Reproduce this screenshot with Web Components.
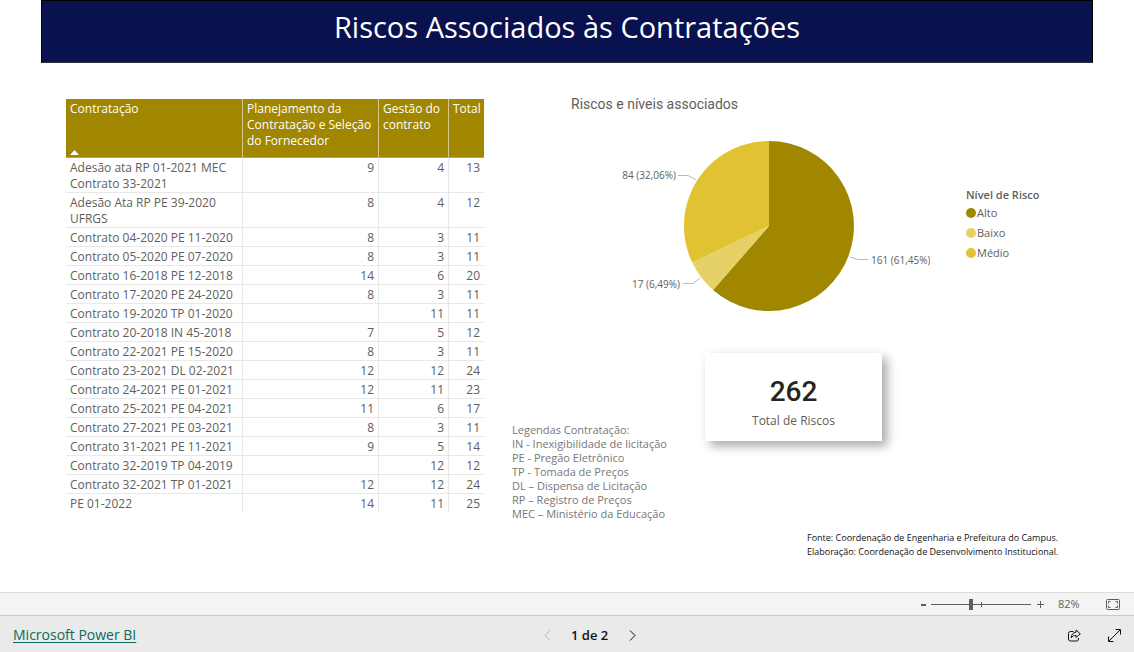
<!DOCTYPE html>
<html lang="pt-BR">
<head>
<meta charset="utf-8">
<title>Riscos Associados às Contratações</title>
<style>
  html, body { margin: 0; height: 100%; background: #fff; }
  body { font-family: "Open Sans", "Noto Sans", sans-serif; font-size: 12px; color: #605e5c; }
</style>
</head>
<body>
<report-page>
  <report-banner slot="banner">Riscos Associados às Contratações</report-banner>
  <contract-table slot="table"></contract-table>
  <risk-chart slot="chart">Riscos e níveis associados</risk-chart>
  <acronym-list slot="notes">
    <span slot="title">Legendas Contratação:</span>
    <span>IN - Inexigibilidade de licitação</span>
    <span>PE - Pregão Eletrônico</span>
    <span>TP - Tomada de Preços</span>
    <span>DL – Dispensa de Licitação</span>
    <span>RP – Registro de Preços</span>
    <span>MEC – Ministério da Educação</span>
  </acronym-list>
  <metric-card slot="metric"><span slot="value">262</span>Total de Riscos</metric-card>
  <source-note slot="source">
    <span>Fonte: Coordenação de Engenharia e Prefeitura do Campus.</span>
    <span>Elaboração: Coordenação de Desenvolvimento Institucional.</span>
  </source-note>
  <zoom-bar slot="footer"></zoom-bar>
  <page-bar slot="footer"></page-bar>
</report-page>

<script>
const define = (name, html, setup) => {
  const template = document.createElement('template');
  template.innerHTML = html;
  customElements.define(name, class extends HTMLElement {
    constructor() {
      super();
      const root = this.attachShadow({ mode: 'open' });
      root.append(template.content.cloneNode(true));
      if (setup) setup(root);
    }
  });
};

define('report-page', `
  <style>
    :host { display: flex; flex-direction: column; min-height: 100vh; }
    main { flex: 1; }
    .canvas { display: grid; grid-template-columns: 418fr 557fr; column-gap: 28px;
      padding: 31px 65px 0 66px; align-items: start; }
    .table { padding-top: 5px; }
    .right { display: flex; flex-direction: column; }
    .row { display: flex; align-items: flex-start; }
    .notes { flex: 0 0 193px; padding-top: 95px; }
    .metric { padding-top: 25px; }
    .source { align-self: flex-end; padding-top: 10px; }
  </style>
  <main>
    <slot name="banner"></slot>
    <div class="canvas">
      <div class="table"><slot name="table"></slot></div>
      <div class="right">
        <slot name="chart"></slot>
        <div class="row">
          <div class="notes"><slot name="notes"></slot></div>
          <div class="metric"><slot name="metric"></slot></div>
        </div>
        <div class="source"><slot name="source"></slot></div>
      </div>
    </div>
  </main>
  <slot name="footer"></slot>
`);

define('report-banner', `
  <style>
    :host { display: block; margin: 0 41px; background: #09114f; border: 1px solid #000;
      border-bottom-color: #32343f; padding-bottom: 9px; }
    h1 { margin: 0; font-size: 29px; line-height: 52px; font-weight: 400; color: #fff; text-align: center; }
  </style>
  <h1><slot></slot></h1>
`);

const contracts = [
  ['Adesão ata RP 01-2021 MEC Contrato 33-2021', 9, 4, 13],
  ['Adesão Ata RP PE 39-2020 UFRGS', 8, 4, 12],
  ['Contrato 04-2020 PE 11-2020', 8, 3, 11],
  ['Contrato 05-2020 PE 07-2020', 8, 3, 11],
  ['Contrato 16-2018 PE 12-2018', 14, 6, 20],
  ['Contrato 17-2020 PE 24-2020', 8, 3, 11],
  ['Contrato 19-2020 TP 01-2020', '', 11, 11],
  ['Contrato 20-2018 IN 45-2018', 7, 5, 12],
  ['Contrato 22-2021 PE 15-2020', 8, 3, 11],
  ['Contrato 23-2021 DL 02-2021', 12, 12, 24],
  ['Contrato 24-2021 PE 01-2021', 12, 11, 23],
  ['Contrato 25-2021 PE 04-2021', 11, 6, 17],
  ['Contrato 27-2021 PE 03-2021', 8, 3, 11],
  ['Contrato 31-2021 PE 11-2021', 9, 5, 14],
  ['Contrato 32-2019 TP 04-2019', '', 12, 12],
  ['Contrato 32-2021 TP 01-2021', 12, 12, 24],
  ['PE 01-2022', 14, 11, 25]
];

define('contract-table', `
  <style>
    :host { display: block; }
    table { width: 100%; table-layout: fixed; border-collapse: separate; border-spacing: 0;
      font-size: 12px; line-height: 16px; }
    .c2 { width: 136px; } .c3 { width: 70px; } .c4 { width: 35px; }
    th, td { box-sizing: border-box; padding: 2px 4px 0; vertical-align: top; font-weight: 400;
      border-right: 1px solid #e8e8e8; border-bottom: 1px solid #e8e8e8; }
    th { height: 59px; background: #a18600; color: #fff; text-align: left;
      border-right-color: #d3c68a; border-bottom-color: #b9a54c; }
    tbody th { height: auto; background: none; color: inherit;
      border-right-color: #e8e8e8; border-bottom-color: #e8e8e8; }
    td { text-align: right; }
    tr > :last-child { border-right: 0; padding-right: 4px; }
    thead th:last-child { padding-right: 0; }
    tbody tr:last-child > * { border-bottom: 0; }
    button { all: unset; display: flex; flex-direction: column; justify-content: space-between;
      align-items: flex-start; height: 54px; cursor: pointer; }
    svg { display: block; }
  </style>
  <table>
    <colgroup><col><col class="c2"><col class="c3"><col class="c4"></colgroup>
    <thead><tr>
      <th scope="col" aria-sort="ascending"><button type="button">Contratação
        <svg width="9" height="5" viewBox="0 0 9 5" aria-hidden="true"><path d="M0 5 4.500 0 9 5z" fill="#fff"/></svg></button></th>
      <th scope="col">Planejamento da Contratação e Seleção do Fornecedor</th>
      <th scope="col">Gestão do contrato</th>
      <th scope="col">Total</th>
    </tr></thead>
    <tbody></tbody>
  </table>
`, root => {
  const body = root.querySelector('tbody');
  for (const contract of contracts) {
    const row = body.insertRow();
    contract.forEach((value, i) => {
      const cell = document.createElement(i ? 'td' : 'th');
      if (!i) cell.scope = 'row';
      cell.textContent = value;
      row.append(cell);
    });
  }
});

define('risk-chart', `
  <style>
    :host { display: block; padding-left: 59px; }
    h2 { margin: 0; font: 400 14px/20px Roboto, sans-serif; color: #605e5c; }
    .plot { display: flex; align-items: flex-start; gap: 36px; padding: 18px 0 0 49px; }
    svg { display: block; flex: none; }
    text { font-size: 10px; fill: #605e5c; }
    polyline { fill: none; stroke: #b8b8b8; }
    .legend { padding-top: 55px; }
    h3 { margin: 0; font-size: 11px; line-height: 16px; font-weight: 600; white-space: nowrap; }
    ul { margin: 0; padding: 0; list-style: none; line-height: 20px; font-size: 11px; }
    li { display: flex; align-items: center; gap: 1px; }
    i { width: 10px; height: 10px; border-radius: 50%; }
    .high { background: #a18600; } .low { background: #e6d167; } .mid { background: #e1c233; }
  </style>
  <h2><slot></slot></h2>
  <div class="plot">
    <svg width="310" height="196" viewBox="0 0 310 196" role="img" aria-label="Riscos por nível">
      <path fill="#a18600" d="M149 94V9A85 85 0 1 1 93 158z"/>
      <path fill="#e6d167" d="M149 94 93 158A85 85 0 0 1 72.200 130.500z"/>
      <path fill="#e1c233" d="M149 94 72.200 130.500A85 85 0 0 1 149 9z"/>
      <polyline points="58,43.500 68,43.500 76,48"/>
      <polyline points="63,151.500 73,151.500 80,146"/>
      <polyline points="230,125 238,127.500 248,127.500"/>
      <text x="56" y="47" text-anchor="end">84 (32,06%)</text>
      <text x="60" y="156" text-anchor="end">17 (6,49%)</text>
      <text x="251" y="132">161 (61,45%)</text>
    </svg>
    <div class="legend">
      <h3>Nível de Risco</h3>
      <ul>
        <li><i class="high"></i>Alto</li>
        <li><i class="low"></i>Baixo</li>
        <li><i class="mid"></i>Médio</li>
      </ul>
    </div>
  </div>
`);

define('acronym-list', `
  <style>
    :host { display: block; font-size: 11px; line-height: 14px; color: #777; white-space: nowrap; }
    ::slotted(span) { display: block; }
  </style>
  <slot name="title"></slot><slot></slot>
`);

define('metric-card', `
  <style>
    :host { display: flex; flex-direction: column; align-items: center; gap: 3px; box-sizing: border-box;
      width: 177px; padding: 23px 8px 10px; background: #fff; box-shadow: 5px 5px 10px rgba(0, 0, 0, .35); }
    strong { font: 500 28px/32px Roboto, sans-serif; color: #252423; }
    span { font-size: 12px; line-height: 20px; }
  </style>
  <strong><slot name="value"></slot></strong>
  <span><slot></slot></span>
`);

define('source-note', `
  <style>
    :host { display: block; min-width: 262px; font-size: 9px; line-height: 14px; color: #111; }
    ::slotted(span) { display: block; }
  </style>
  <slot></slot>
`);

define('zoom-bar', `
  <style>
    :host { display: flex; align-items: center; justify-content: flex-end; box-sizing: border-box; height: 23px;
      padding-right: 14px; background: #f4f4f4; border-top: 1px solid #dcdcdc; color: #605e5c; }
    button { all: unset; cursor: pointer; display: flex; align-items: center; justify-content: center; }
    .step { width: 19px; height: 22px; }
    svg { display: block; }
    input { appearance: none; width: 100px; height: 11px; margin: 0; cursor: pointer;
      background: linear-gradient(#605e5c, #605e5c) 50px 50% / 1px 5px no-repeat,
        linear-gradient(#605e5c, #605e5c) 0 50% / 100% 1px no-repeat; }
    input::-webkit-slider-thumb { appearance: none; width: 4px; height: 11px; background: #605e5c; }
    output { width: 24px; margin: 0 24px 0 8px; font-size: 11px; line-height: 20px; }
  </style>
  <button class="step" type="button" aria-label="Reduzir">
    <svg width="9" height="9" viewBox="0 0 9 9"><path d="M4 5h5" stroke="#605e5c" stroke-width="2"/></svg></button>
  <input id="zoom" type="range" min="10" max="192" value="82" aria-label="Zoom">
  <button class="step" type="button" aria-label="Ampliar">
    <svg width="9" height="9" viewBox="0 0 9 9"><path d="M1 4.500h7M4.500 1v7" stroke="#605e5c"/></svg></button>
  <output for="zoom">82%</output>
  <button type="button" aria-label="Ajustar à página">
    <svg width="14" height="11" viewBox="0 0 14 11" fill="none" stroke="#605e5c">
      <rect x=".5" y=".5" width="13" height="10" rx="1"/>
      <path d="M2.500 4.500v-2h2M9.500 2.500h2v2M11.500 6.500v2h-2M4.500 8.500h-2v-2"/></svg></button>
`, root => {
  const input = root.querySelector('input');
  const output = root.querySelector('output');
  const [minus, plus] = root.querySelectorAll('.step');
  const show = () => { output.textContent = input.value + '%'; };
  input.addEventListener('input', show);
  minus.addEventListener('click', () => { input.stepDown(10); show(); });
  plus.addEventListener('click', () => { input.stepUp(10); show(); });
});

define('page-bar', `
  <style>
    :host { display: flex; align-items: center; box-sizing: border-box; height: 37px; padding: 2px 0 0 13px;
      background: #eaeaea; border-top: 1px solid #c8c8c8; color: #111; }
    a { font-size: 14px; line-height: 20px; color: #0b6a5d; text-underline-offset: 2px; }
    nav { flex: 1; display: flex; align-items: center; justify-content: center; gap: 12px;
      font-size: 13px; line-height: 20px; font-weight: 600; }
    button { all: unset; cursor: pointer; display: flex; align-items: center; justify-content: center;
      width: 24px; height: 34px; }
    .tools { display: flex; padding-left: 11px; }
    .tools button { width: 40px; }
    svg { display: block; fill: none; stroke: #111; }
    button:disabled svg { stroke: #b5b5b5; }
  </style>
  <a href="#">Microsoft Power BI</a>
  <nav aria-label="Páginas">
    <button type="button" disabled aria-label="Página anterior">
      <svg width="7" height="11" viewBox="0 0 7 11"><path d="M6 .5 1 5.500l5 5"/></svg></button>
    <span>1 de 2</span>
    <button type="button" aria-label="Próxima página">
      <svg width="7" height="11" viewBox="0 0 7 11"><path d="M1 .5l5 5-5 5"/></svg></button>
  </nav>
  <div class="tools">
    <button type="button" aria-label="Compartilhar">
      <svg width="13" height="13" viewBox="0 0 13 13">
        <path d="M5.500 2.500h-3a2 2 0 0 0-2 2v5.500a2 2 0 0 0 2 2h6a2 2 0 0 0 2-2V9"/>
        <path d="M8 1l4.300 3.800L8 8.500V6.500C5.800 6.400 4.500 7 3.300 8.800 3.400 5.600 5 3.400 8 3.200z" stroke-linejoin="round"/></svg></button>
    <button type="button" aria-label="Tela inteira">
      <svg width="13" height="13" viewBox="0 0 13 13"><path d="M1 12 12 1M7.500 .5h5v5M.5 7.500v5h5"/></svg></button>
  </div>
`);
</script>
</body>
</html>
